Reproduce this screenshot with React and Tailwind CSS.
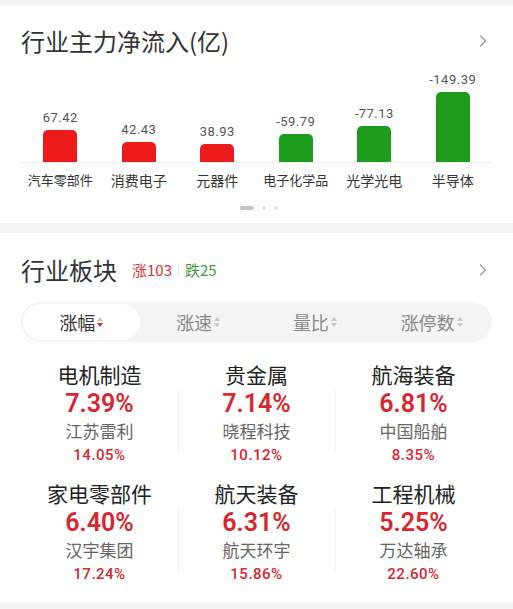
import React from 'react';
import { ChevronRight } from 'lucide-react';

const font = { fontFamily: '"Noto Sans CJK SC", "Noto Sans", sans-serif' };
const numFont = { fontFamily: 'Roboto, "Noto Sans CJK SC", sans-serif' };

const flows = [
    { name: '汽车零部件', value: 67.42 },
    { name: '消费电子', value: 42.43 },
    { name: '元器件', value: 38.93 },
    { name: '电子化学品', value: -59.79 },
    { name: '光学光电', value: -77.13 },
    { name: '半导体', value: -149.39 },
];

const sectors = [
    { name: '电机制造', pct: '7.39%', stock: '江苏雷利', stockPct: '14.05%' },
    { name: '贵金属', pct: '7.14%', stock: '晓程科技', stockPct: '10.12%' },
    { name: '航海装备', pct: '6.81%', stock: '中国船舶', stockPct: '8.35%' },
    { name: '家电零部件', pct: '6.40%', stock: '汉宇集团', stockPct: '17.24%' },
    { name: '航天装备', pct: '6.31%', stock: '航天环宇', stockPct: '15.86%' },
    { name: '工程机械', pct: '5.25%', stock: '万达轴承', stockPct: '22.60%' },
];

const tabs = ['涨幅', '涨速', '量比', '涨停数'];

const SortArrows = ({ active }) => (
    <span className="inline-flex flex-col ml-[2px] gap-[2px]">
        <span className="w-0 h-0 border-l-[3px] border-r-[3px] border-b-[4px] border-l-transparent border-r-transparent border-b-[#c8c8c8]" />
        <span className={`w-0 h-0 border-l-[3px] border-r-[3px] border-t-[4px] border-l-transparent border-r-transparent ${active ? 'border-t-[#e02a2a]' : 'border-t-[#c8c8c8]'}`} />
    </span>
);

const maxAbs = 149.39;

const App = () => {
    return (
        <div className="w-[513px] h-[609px] bg-[#f4f4f4] pt-[5px] overflow-hidden" style={font}>
            {/* Net inflow chart */}
            <div className="bg-white h-[218px] px-[21px]">
                <div className="flex items-center justify-between pt-[14px] h-[58px]">
                    <h2 className="text-[24px] leading-[32px] text-[#333]">行业主力净流入(亿)</h2>
                    <ChevronRight size={20} strokeWidth={1.5} className="text-[#999] -mr-[1px]" />
                </div>
                <div className="grid grid-cols-6 h-[100px] items-end border-b border-[#eeeeee]">
                    {flows.map((f) => (
                        <div key={f.name} className="flex flex-col items-center">
                            <span className="text-[13px] leading-[14px] text-[#555] tracking-[0.5px] mb-[5px]" style={numFont}>
                                {f.value.toFixed(2)}
                            </span>
                            <div
                                className={`w-[34px] rounded-t-[5px] ${f.value > 0 ? 'bg-[#ee1b1b]' : 'bg-[#1c9b1c]'}`}
                                style={{ height: `${Math.round((Math.abs(f.value) / maxAbs) * 70)}px` }}
                            />
                        </div>
                    ))}
                </div>
                <div className="grid grid-cols-6 mt-[8px]">
                    {flows.map((f) => (
                        <span
                            key={f.name}
                            className={`text-center leading-[18px] text-[#333] whitespace-nowrap ${f.name.length > 4 ? 'text-[13px]' : 'text-[14px]'}`}
                        >
                            {f.name}
                        </span>
                    ))}
                </div>
                <div className="flex justify-center items-center gap-[8px] mt-[17px] ml-[4px]">
                    <span className="w-[14px] h-[4px] rounded-full bg-[#c4c4c4]" />
                    <span className="w-[4px] h-[4px] rounded-full bg-[#e2e2e2]" />
                    <span className="w-[4px] h-[4px] rounded-full bg-[#e2e2e2]" />
                </div>
            </div>

            {/* Industry sectors */}
            <div className="bg-white mt-[10px] h-[370px] px-[21px]">
                <div className="flex items-center justify-between pt-[19px] h-[55px]">
                    <div className="flex items-center">
                        <h2 className="text-[24px] leading-[32px] text-[#333]">行业板块</h2>
                        <span className="ml-[15px] text-[15px] text-[#d6343c]">涨103</span>
                        <span className="mx-[6px] w-px h-[12px] bg-[#e6e6e6]" />
                        <span className="text-[15px] text-[#3a9d3a]">跌25</span>
                    </div>
                    <ChevronRight size={20} strokeWidth={1.5} className="text-[#999] -mr-[1px]" />
                </div>
                <div className="mt-[14px] h-[40px] rounded-full bg-[#f4f4f4] grid grid-cols-4 p-[2px]">
                    {tabs.map((t, i) => (
                        <div
                            key={t}
                            className={`flex items-center justify-center rounded-full ${i === 0 ? 'bg-white text-[#333]' : 'text-[#888]'}`}
                        >
                            <span className="text-[18px] leading-[24px]">{t}</span>
                            <SortArrows active={i === 0} />
                        </div>
                    ))}
                </div>
                <div className="grid grid-cols-3 mt-[19px] gap-y-[13px]">
                    {sectors.map((s, i) => (
                        <div key={s.name} className="flex flex-col items-center relative">
                            {i % 3 !== 0 && (
                                <span className="absolute left-0 top-[28px] bottom-[14px] w-px bg-[#f2f2f2]" />
                            )}
                            <span className="text-[21px] leading-[26px] text-[#222]">{s.name}</span>
                            <span className="text-[25px] leading-[30px] font-semibold text-[#d9262e] mt-[2px]" style={numFont}>
                                {s.pct}
                            </span>
                            <span className="text-[17px] leading-[24px] text-[#666]">{s.stock}</span>
                            <span className="text-[15px] leading-[24px] font-medium text-[#d9262e] tracking-[0.5px]" style={numFont}>
                                {s.stockPct}
                            </span>
                        </div>
                    ))}
                </div>
            </div>
        </div>
    );
};

export default App;
